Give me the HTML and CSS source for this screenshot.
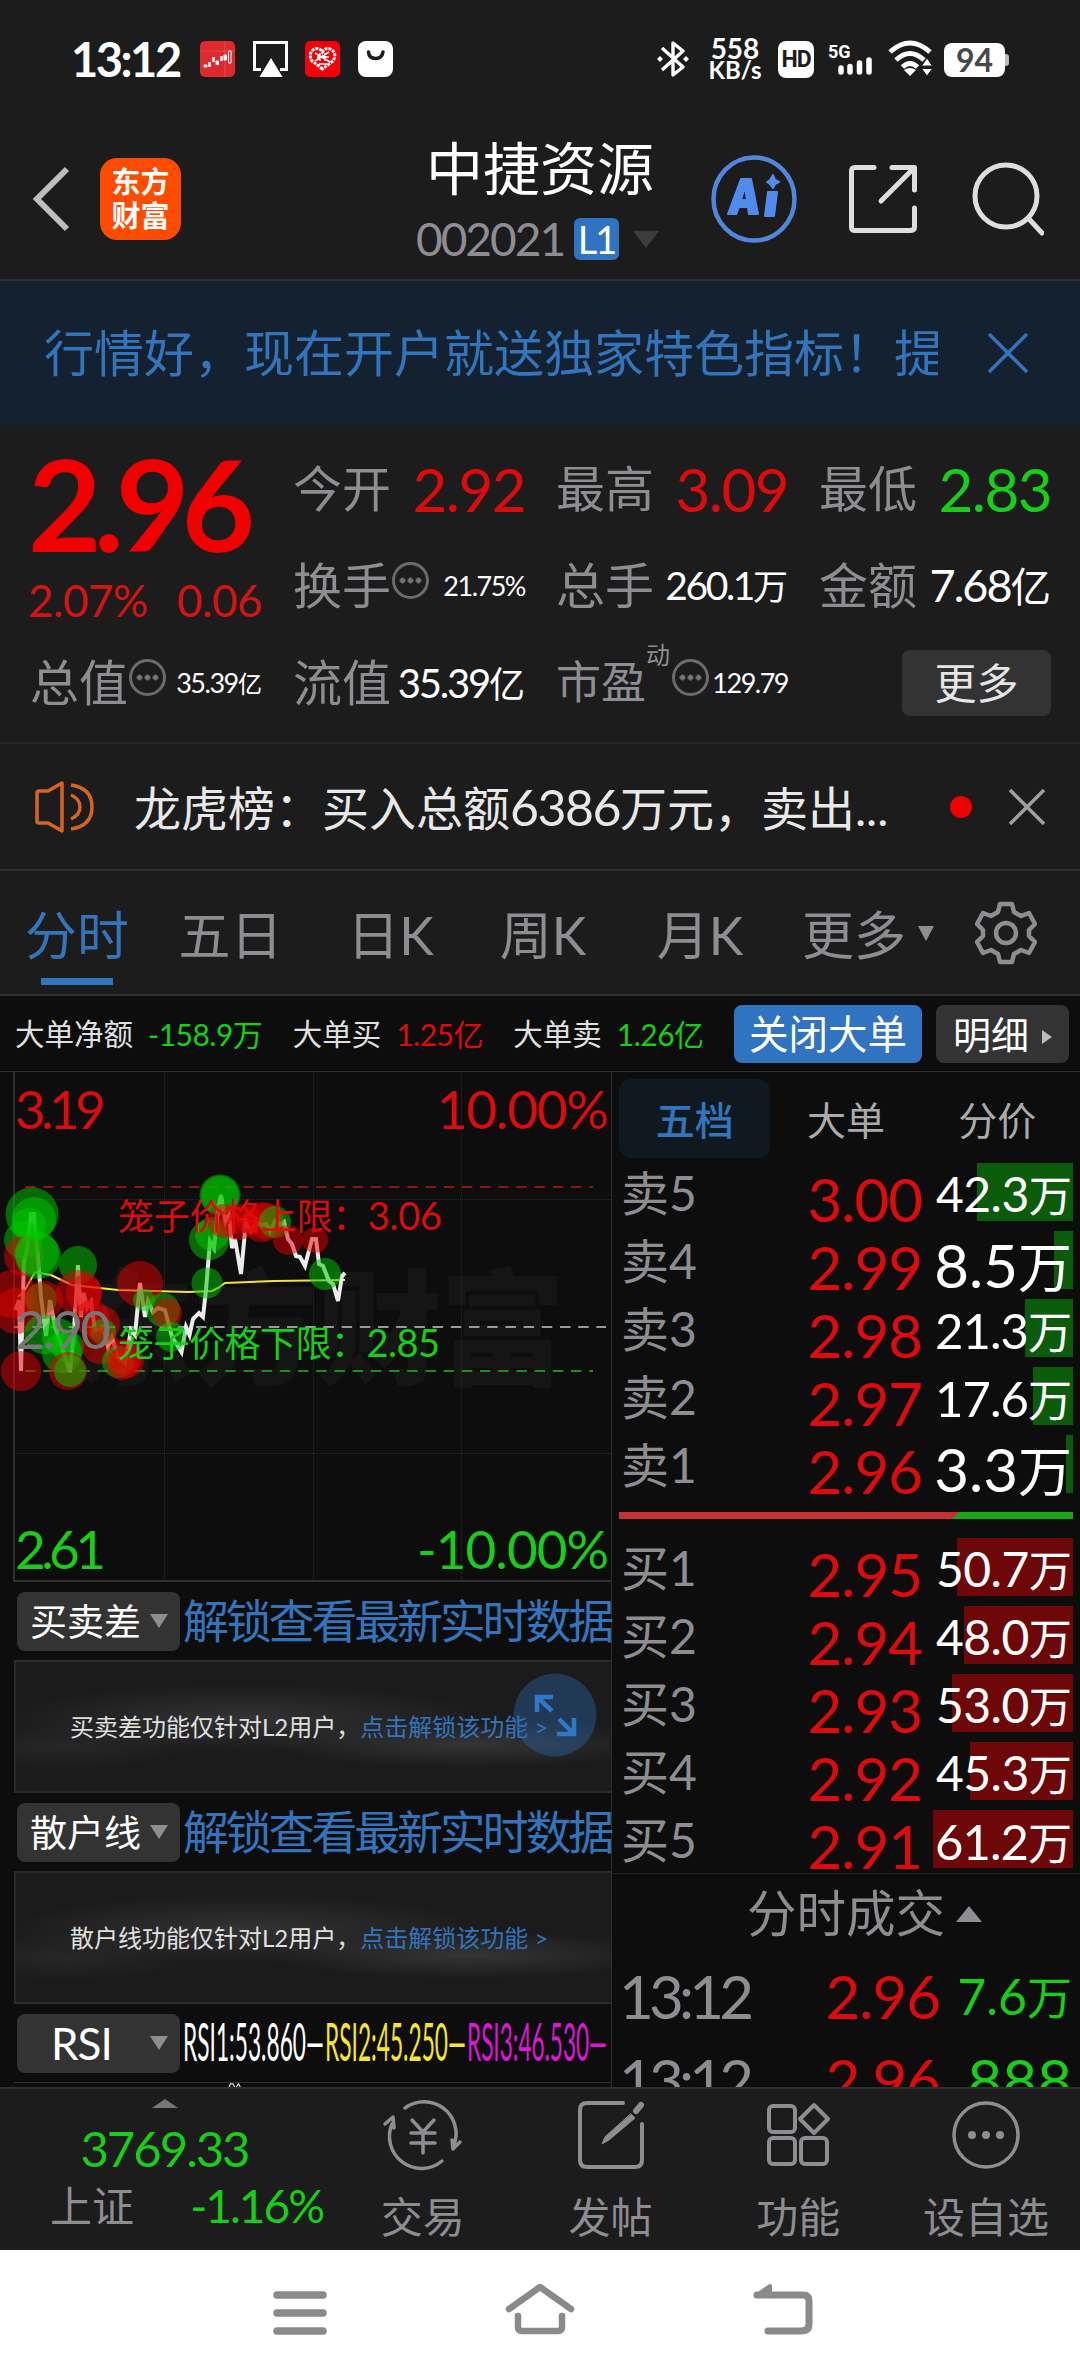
FILE: index.html
```html
<!DOCTYPE html>
<html lang="zh-CN">
<head>
    <meta charset="UTF-8">
    <meta name="viewport" content="width=device-width, initial-scale=1.0">
    <title>中捷资源 002021</title>
    <link rel="stylesheet" href="styles.css">
</head>
<body>
    <div class="status">
        <span class="clock">13:12</span>
        <svg class="st-ico" viewBox="0 0 35 36">
            <rect width="35" height="36" rx="5" fill="#dd2a2e"/>
            <path d="M0 10H35M25 0V36" stroke="#e8484a" stroke-width="1"/>
            <g fill="#fff" stroke="#fff" stroke-width="1">
                <path d="M4 24h3v2H4zM16 20h2.500v3.500H16zM24 14h2.500v5H24z"/>
                <path d="M9.500 21v5M13.500 16v5M21.500 15v5" stroke-width="2.500"/>
                <path d="M28.500 10h2.500v12h-2.500z" fill="none"/>
            </g>
        </svg>
        <svg class="st-ico" viewBox="0 0 35 36">
            <path d="M8 28.500H1.500V1.500H33.500V28.500H27" fill="none" stroke="#fff" stroke-width="3"/>
            <path d="M18 17L29.500 36H6.500Z" fill="#fff"/>
        </svg>
        <svg class="st-ico" viewBox="0 0 35 36">
            <rect width="35" height="36" rx="5" fill="#f4000b"/>
            <path d="M17.500 28L7 20Q3 13 8 9Q14 5 17.500 11Q21 5 27 9Q32 13 28 20Z" fill="none" stroke="#fff" stroke-width="3" stroke-dasharray="3 1"/>
            <path d="M10 12l15 9M10 20l14-9M15 12v8M20 12v8M12 16h12M14 23h8" stroke="#fff" stroke-width="1.600"/>
        </svg>
        <svg class="st-ico" viewBox="0 0 35 36">
            <rect width="35" height="36" rx="8" fill="#fff"/>
            <path d="M10.500 11Q11 17.500 17.500 17.500T25 11" fill="none" stroke="#1c1c1c" stroke-width="3.500" stroke-linecap="round"/>
        </svg>
        <div class="st-right">
            <svg width="33" height="36" viewBox="0 0 33 36">
                <path d="M5 7L26 26L16 34V2L26 10L5 29" fill="none" stroke="#fff" stroke-width="3.400" stroke-linejoin="round"/>
                <path d="M3 15l3 3-3 3-3-3zM29 15l3 3-3 3-3-3z" fill="#fff"/>
            </svg>
            <div class="speed"><span>558</span><span>KB/s</span></div>
            <span class="hd">HD</span>
            <svg class="signal" width="46" height="36" viewBox="0 0 46 36">
                <text x="0" y="17" class="g5">5G</text>
                <path d="M13 27v4M22 25.500v5.500M31.500 22v9M41 19v12" stroke="#fff" stroke-width="5.500" stroke-linecap="round"/>
            </svg>
            <svg class="wifi" width="46" height="38" viewBox="0 0 46 38">
                <path d="M2 12Q22-6 42 12M8 20Q22 7 36 20M14.500 27Q22 20 29.500 27" fill="none" stroke="#fff" stroke-width="5"/>
                <path d="M22 36L16 30Q22 26 28 30Z" fill="#fff"/>
                <path d="M39 18L44.500 26H33.500ZM39 36L44.500 28.500H33.500Z" fill="#fff" stroke="#1c1c1c" stroke-width="1"/>
            </svg>
            <span class="battery">94</span>
        </div>
    </div>

    <div class="header">
        <svg class="back" width="40" height="68" viewBox="0 0 40 68">
            <path d="M35 4L5 34L35 64" fill="none" stroke="#bdbdbd" stroke-width="6"/>
        </svg>
        <div class="logo"><span>东方</span><span>财富</span></div>
        <div class="title">
            <h1>中捷资源</h1>
            <div class="code">002021<span class="l1">L1</span><i class="tri-down"></i></div>
        </div>
        <svg class="h-ico" width="86" height="88" viewBox="0 0 86 88">
            <ellipse cx="43" cy="44" rx="40.500" ry="41.500" fill="none" stroke="#5186df" stroke-width="4.500"/>
            <g fill="#4f8cee" stroke="#4f8cee" stroke-width="2" stroke-linejoin="round">
                <path fill-rule="evenodd" d="M30 24H40L47 59H38L37 52H28L25 59H17ZM34 32L30 45H36Z"/>
                <path d="M57 37H66L63 61H54Z"/>
                <path d="M62 20L64 25L68 27L64 29L62 33L59 29L56 27L59 25Z"/>
            </g>
        </svg>
        <svg class="h-ico share" width="72" height="72" viewBox="0 0 72 72" fill="none" stroke="#dedede" stroke-width="5" stroke-linecap="round" stroke-linejoin="round">
            <path d="M27 4.500H8Q4.500 4.500 4.500 8V64Q4.500 67.500 8 67.500H63Q67.500 67.500 67.500 64V45"/>
            <path d="M45 4.500H67.500V27M67 5L34 38"/>
        </svg>
        <svg class="h-ico search" width="72" height="76" viewBox="0 0 72 76" fill="none" stroke="#dedede" stroke-width="5" stroke-linecap="round">
            <circle cx="34" cy="35" r="31"/>
            <path d="M57 58L70 72"/>
        </svg>
    </div>

    <div class="banner">
        <p>行情好，现在开户就送独家特色指标！提</p>
        <svg width="42" height="42" viewBox="0 0 42 42"><path d="M2 2L40 40M40 2L2 40" stroke="#3375bd" stroke-width="3.500"/></svg>
    </div>

    <div class="quote">
        <div class="price">
            <b>2.96</b>
            <div class="change"><span>2.07%</span><span>0.06</span></div>
        </div>
        <div class="cell"><label>今开</label><em class="v60 up">2.92</em></div>
        <div class="cell"><label>最高</label><em class="v60 up">3.09</em></div>
        <div class="cell"><label>最低</label><em class="v60 down">2.83</em></div>
        <div class="cell"><label>换手</label><i class="dots"></i><em class="v27">21.75%</em></div>
        <div class="cell"><label>总手</label><em class="v40">260.1<u>万</u></em></div>
        <div class="cell"><label>金额</label><em class="v44">7.68<u>亿</u></em></div>
        <div class="cell"><label>总值</label><i class="dots"></i><em class="v27">35.39<u>亿</u></em></div>
        <div class="cell"><label>流值</label><em class="v38">35.39<u>亿</u></em></div>
        <div class="cell"><label class="pe">市盈<sup>动</sup></label><i class="dots"></i><em class="v27">129.79</em></div>
        <div class="cell"><button class="more">更多</button></div>
    </div>

    <div class="news">
        <svg width="62" height="52" viewBox="0 0 62 52" fill="none" stroke="#d8641e" stroke-width="3.500" stroke-linejoin="round">
            <path d="M3 12Q3 10 5 10H14L28 2V50L14 42H5Q3 42 3 40Z"/>
            <path d="M37 14Q46 18 46 26T37 38M37 4Q58 7 58 26T37 48"/>
        </svg>
        <p>龙虎榜：买入总额<span>6386</span>万元，卖出...</p>
        <i class="dot"></i>
        <svg width="36" height="36" viewBox="0 0 36 36"><path d="M1 1L35 35M35 1L1 35" stroke="#a0a0a0" stroke-width="3.500"/></svg>
    </div>

    <div class="tabs">
        <span class="active">分时</span>
        <span>五日</span>
        <span>日K</span>
        <span>周K</span>
        <span>月K</span>
        <span>更多<i></i></span>
        <svg width="62" height="64" viewBox="0 0 62 64" fill="none" stroke="#8e8d92" stroke-width="4.500" stroke-linejoin="round">
            <path d="M25 3H37L39 11L46 15L54 12L60 23L54 29V35L60 41L54 52L46 49L39 53L37 61H25L23 53L16 49L8 52L2 41L8 35V29L2 23L8 12L16 15L23 11Z"/>
            <circle cx="31" cy="32" r="10"/>
        </svg>
    </div>

    <div class="strip">
        <span>大单净额</span><em class="down">-158.9万</em>
        <span>大单买</span><em class="up">1.25亿</em>
        <span>大单卖</span><em class="down">1.26亿</em>
        <button class="close-big">关闭大单</button>
        <button class="detail">明细<i></i></button>
    </div>

    <div class="main">
        <div class="left">
            <svg class="chart" width="612" height="510" viewBox="0 0 612 510">
                <text class="wm" x="70" y="303" textLength="495">东方财富</text>
                <g stroke="#2a2a2a" stroke-width="1" stroke-dasharray="1 1">
                    <path d="M164.500 0V509M313.500 0V509M461.500 0V509M14 127.500H612M14 381.500H612"/>
                </g>
                <path d="M14 0V509H612" fill="none" stroke="#303030" stroke-width="2"/>
                <g fill="none" stroke-width="1.800" stroke-dasharray="10.500 7.700">
                    <path d="M25 115H593" stroke="#8d1512"/>
                    <path d="M14 255H606" stroke="#9a999c"/>
                    <path d="M25 299H593" stroke="#1b8f1b"/>
                </g>
                <path d="M18 225L25 218L35 200L51 203L72 213L118 218L188 220L212 219L218 216L225 211L274 209L345 208" fill="none" stroke="#f3e24a" stroke-width="2"/>
                <path d="M15.700 238L19 228L21 299L23 221L24 190L27 177L31 142H34L35 162L38 184L41 225L46 264L50 228L55 255L63 279L70 300L74 258L78 193L81 245L83.500 221L87 236L91 230L95 258L103 255L108 275L112 265L118 286L125 291L131 258L135 263L140 211L145 245L148 229L153 240L158 236L165 238L172 265L181.500 280L186 255L189.500 263L193 247L199 241L203 245L206 218L210 169L214 176L218 137L221 123L225.500 150L229 143L232 176L235 167L241 202L246 149L251 159L256 151L261 153L266 152L270 159L275 149L280 153L284 150L288 167L292 172L296 184L300 185L305 194L312 167H316L319 192L323 194L329 209L333 212L338 229L342 204L345 201" fill="none" stroke="#ececec" stroke-width="4"/>
                <g id="bubbles"></g>
                <text class="up s53" x="15" y="56.500" textLength="91">3.19</text>
                <text class="up s53" x="437" y="56.500" textLength="172">10.00%</text>
                <text class="down s53" x="15" y="497" textLength="91">2.61</text>
                <text class="down s53" x="417" y="497" textLength="192">-10.00%</text>
                <text class="base s53" x="15" y="277" textLength="96">2.90</text>
                <text class="up s36" x="118" y="157.500" textLength="324">笼子价格上限：<tspan class="s38">3.06</tspan></text>
                <text class="down s36" x="118" y="284.500" textLength="322">笼子价格下限：<tspan class="s38">2.85</tspan></text>
            </svg>

            <div class="bar"><button>买卖差<i></i></button><p>解锁查看最新实时数据</p></div>
            <div class="lock">
                <span>买卖差功能仅针对L2用户，</span><a>点击解锁该功能 &gt;</a>
                <svg class="expand" width="84" height="84" viewBox="0 0 84 84">
                    <circle cx="42" cy="42" r="41.500" fill="#2c6cb5" fill-opacity=".38"/>
                    <path d="M24 39V24H40M24 24L39 38M61 45V61H44M61 61L46 46" fill="none" stroke="#3079c8" stroke-width="4.500"/>
                </svg>
            </div>
            <div class="bar"><button>散户线<i></i></button><p>解锁查看最新实时数据</p></div>
            <div class="lock">
                <span>散户线功能仅针对L2用户，</span><a>点击解锁该功能 &gt;</a>
            </div>
            <div class="bar">
                <button class="rsi">RSI<i></i></button>
                <svg width="428" height="70" viewBox="0 0 428 70" class="rsi-vals">
                    <text x="0" y="53" fill="#fff" textLength="141" lengthAdjust="spacingAndGlyphs">RSI1:53.860—</text>
                    <text x="142" y="53" fill="#f5e62a" textLength="141" lengthAdjust="spacingAndGlyphs">RSI2:45.250—</text>
                    <text x="284" y="53" fill="#dc19d2" textLength="140" lengthAdjust="spacingAndGlyphs">RSI3:46.530—</text>
                </svg>
            </div>
            <svg class="next" width="598" height="5" viewBox="0 0 598 5"><path d="M194 5L196 1L199 1L201 5M203 5L206 1L208 5" fill="none" stroke="#ddd" stroke-width="1.500"/></svg>
        </div>

        <div class="right">
            <div class="book-tabs"><span class="active">五档</span><span>大单</span><span>分价</span></div>
            <div class="book sell">
                <div class="row"><span>卖5</span><em>3.00</em><b class="f46" style="--w:96px">42.3<u>万</u></b></div>
                <div class="row"><span>卖4</span><em>2.99</em><b class="f60" style="--w:19px">8.5<u>万</u></b></div>
                <div class="row"><span>卖3</span><em>2.98</em><b class="f48" style="--w:48px">21.3<u>万</u></b></div>
                <div class="row"><span>卖2</span><em>2.97</em><b class="f48" style="--w:40px">17.6<u>万</u></b></div>
                <div class="row"><span>卖1</span><em>2.96</em><b class="f60" style="--w:7px">3.3<u>万</u></b></div>
            </div>
            <div class="ratio"></div>
            <div class="book buy">
                <div class="row"><span>买1</span><em>2.95</em><b class="f46" style="--w:116px">50.7<u>万</u></b></div>
                <div class="row"><span>买2</span><em>2.94</em><b class="f46" style="--w:109px">48.0<u>万</u></b></div>
                <div class="row"><span>买3</span><em>2.93</em><b class="f46" style="--w:121px">53.0<u>万</u></b></div>
                <div class="row"><span>买4</span><em>2.92</em><b class="f46" style="--w:103px">45.3<u>万</u></b></div>
                <div class="row"><span>买5</span><em>2.91</em><b class="f48" style="--w:140px">61.2<u>万</u></b></div>
            </div>
            <div class="deal-head">分时成交<i></i></div>
            <div class="deal"><span>13:12</span><em>2.96</em><b class="f50">7.6<u>万</u></b></div>
            <div class="deal"><span>13:12</span><em>2.96</em><b class="f60">888</b></div>
        </div>
    </div>

    <div class="toolbar">
        <div class="index">
            <i></i>
            <b>3769.33</b>
            <div><span>上证</span><em>-1.16%</em></div>
        </div>
        <div class="tool">
            <svg width="80" height="72" viewBox="0 0 80 72" fill="none" stroke="#8e8d92" stroke-width="3.500" stroke-linecap="round" stroke-linejoin="round">
                <path d="M22 9A32 32 0 0 1 71 46M69 41L70 50L77 43"/>
                <path d="M59 62A32 32 0 0 1 9 25M2 25L10 18L11 29"/>
                <path d="M29 21L40 33L51 21M28 34H52M28 44H52M40 33V54"/>
            </svg>
            <span>交易</span>
        </div>
        <div class="tool">
            <svg width="72" height="72" viewBox="0 0 72 72" fill="none" stroke="#8e8d92" stroke-width="4" stroke-linecap="round">
                <path d="M48 4H12Q5 4 5 11V61Q5 68 12 68H60Q67 68 67 61V25"/>
                <path d="M66 6L61 12" stroke-width="6"/>
                <path d="M56 15L60 19L34 41L27 45L30 38Z" fill="#8e8d92" stroke-width="1"/>
            </svg>
            <span>发帖</span>
        </div>
        <div class="tool">
            <svg width="72" height="72" viewBox="0 0 72 72" fill="none" stroke="#8e8d92" stroke-width="4">
                <rect x="7" y="7" width="26" height="26" rx="4"/>
                <rect x="7" y="39" width="26" height="26" rx="4"/>
                <rect x="39" y="39" width="26" height="26" rx="4"/>
                <path d="M52 6L66 20L52 34L38 20Z" stroke-linejoin="round"/>
            </svg>
            <span>功能</span>
        </div>
        <div class="tool">
            <svg width="72" height="72" viewBox="0 0 72 72">
                <circle cx="36" cy="36" r="32" fill="none" stroke="#8e8d92" stroke-width="3.500"/>
                <g fill="#8e8d92"><circle cx="22" cy="36" r="4"/><circle cx="36" cy="36" r="4"/><circle cx="50" cy="36" r="4"/></g>
            </svg>
            <span>设自选</span>
        </div>
    </div>

    <div class="sysnav">
        <svg width="54" height="54" viewBox="0 0 54 54"><path d="M4 13H50M4 31H50M4 49H50" stroke="#8a8a8a" stroke-width="7.500" stroke-linecap="round"/></svg>
        <svg width="70" height="54" viewBox="0 0 70 54" fill="none" stroke="#8a8a8a" stroke-width="6.500" stroke-linecap="round" stroke-linejoin="round"><path d="M4 27L35 5L66 27M13 34V45Q13 49 17 49H53Q57 49 57 45V34"/></svg>
        <svg width="60" height="54" viewBox="0 0 60 54" fill="none" stroke="#8a8a8a" stroke-width="7" stroke-linecap="round" stroke-linejoin="round"><path d="M4 13H50Q56 13 56 19V42Q56 49 48 49H15"/><path d="M4 13L17 4V13Z" fill="#8a8a8a" stroke-width="4"/></svg>
    </div>

    <script>
        // big order bubbles: x, y, radius, side
        const bubbles = [
            [32, 142, 26.5, 's'], [34, 147, 22, 's'], [29, 153, 17, 's'], [23, 168, 19, 's'], [24, 184, 20, 'b'],
            [38, 184, 23, 's'], [37, 181, 22, 's'], [12, 222, 24, 'b'], [16, 239, 23, 'b'], [21, 299, 20, 'b'],
            [41, 227, 16, 's'], [44, 228, 19, 'b'], [78, 193, 19, 's'], [79, 221, 23, 'b'], [84, 221, 18, 'b'],
            [44, 262, 20, 's'], [60, 265, 18, 's'], [62, 281, 20, 's'], [68, 275, 16, 's'], [68, 299, 19, 'b'],
            [70, 299, 16, 's'], [92, 246, 18, 'b'], [102, 252, 18, 'b'], [103, 260, 13, 's'], [100, 273, 19, 'b'],
            [124, 285, 18, 'b'], [118, 290, 16, 's'], [122, 292, 16, 'b'], [127, 289, 17, 'b'], [140, 212, 23, 'b'],
            [144, 228, 11, 's'], [163, 238, 17, 's'], [167, 241, 15, 'b'], [171, 265, 15, 's'], [207, 211, 15.5, 's'],
            [209, 168, 20, 's'], [212, 162, 17, 's'], [220, 123, 20.5, 's'], [220, 123, 19, 's'], [224, 149, 17, 'b'],
            [238, 150, 18, 'b'], [250, 148, 14, 'b'], [262, 150, 20, 'b'], [266, 149, 18, 'b'], [275, 150, 16, 's'],
            [288, 168, 15, 'b'], [315, 168, 13, 'b'], [325, 202, 16, 's']
        ];
        const layer = document.getElementById('bubbles');
        bubbles.forEach(([x, y, r, side]) => {
            const c = document.createElementNS('http://www.w3.org/2000/svg', 'circle');
            c.setAttribute('cx', x);
            c.setAttribute('cy', y);
            c.setAttribute('r', r);
            c.setAttribute('class', side === 's' ? 'bub-s' : 'bub-b');
            layer.appendChild(c);
        });
    </script>
</body>
</html>
```
FILE: styles.css
```css
* {
    box-sizing: border-box;
}
body {
    margin: 0;
    width: 1080px;
    height: 2376px;
    overflow: hidden;
    background: #1c1c1c;
    color: #fff;
    font-family: Lato, "Noto Sans CJK SC", sans-serif;
    line-height: 1;
    display: flex;
    flex-direction: column;
}
body > div {
    flex: none;
}
h1, p {
    margin: 0;
    font-weight: 400;
    white-space: nowrap;
}
em, i, u {
    font-style: normal;
    text-decoration: none;
}
span, em, label {
    white-space: nowrap;
}
button {
    border: none;
    padding: 0;
    color: #fff;
    background: #333;
    font-family: inherit;
    line-height: 1;
    border-radius: 8px;
    white-space: nowrap;
}
/* digits run a bit larger than the unit behind them */
u {
    font-size: .9em;
    letter-spacing: 0;
}
.up {
    color: #dd0b0b;
    fill: #dd0b0b;
}
.down {
    color: #17cf17;
    fill: #17cf17;
}

/* status bar */
.status {
    height: 118px;
    padding: 0 72px 0 71px;
    display: flex;
    align-items: center;
}
.clock {
    width: 129px;
    font-size: 47px;
    font-weight: 700;
    letter-spacing: -2.500px;
}
.st-ico {
    width: 35px;
    height: 36px;
    margin-right: 17.500px;
}
.st-right {
    margin-left: auto;
    display: flex;
    align-items: center;
}
.speed {
    width: 50px;
    margin: 0 18px 0 20px;
    display: flex;
    flex-direction: column;
    align-items: center;
    font-size: 28px;
    font-weight: 700;
    line-height: 21px;
}
.speed span:last-child {
    font-size: 24px;
}
.hd {
    width: 36px;
    height: 37px;
    border-radius: 8px;
    background: #fff;
    color: #1c1c1c;
    font: 700 23px/37px Roboto, sans-serif;
    letter-spacing: -1px;
    text-align: center;
}
.signal {
    margin: 0 14px;
}
.g5 {
    font: 700 18px Roboto, sans-serif;
    fill: #fff;
}
.battery {
    position: relative;
    width: 61px;
    height: 34px;
    margin: 2px 3px 0 10px;
    border-radius: 8px;
    background: #fff;
    color: #484848;
    font-size: 32px;
    font-weight: 700;
    line-height: 34px;
    text-align: center;
}
.battery::after {
    content: "";
    position: absolute;
    right: -4px;
    top: 11px;
    width: 4px;
    height: 12px;
    border-radius: 0 3px 3px 0;
    background: #bbb;
}

/* title */
.header {
    height: 163px;
    padding: 0 35px 0 32px;
    border-bottom: 2px solid #303030;
    display: flex;
    align-items: center;
}
.logo {
    width: 81px;
    height: 82px;
    margin-left: 28px;
    border-radius: 17px;
    background: #ff4b00;
    display: flex;
    flex-direction: column;
    align-items: center;
    justify-content: center;
    font-size: 29px;
    font-weight: 700;
    line-height: 34px;
}
.title {
    width: 260px;
    margin: 5px 0 0 229px;
    text-align: center;
}
.title h1 {
    font-size: 57px;
    line-height: 76px;
}
.code {
    height: 66px;
    margin-left: 6px;
    display: flex;
    align-items: center;
    color: #8e8d92;
    font-size: 46px;
    letter-spacing: -2px;
}
.l1 {
    width: 45px;
    height: 42px;
    margin-left: 10px;
    border-radius: 6px;
    background: #3074c1;
    color: #fff;
    font-size: 38px;
    line-height: 42px;
    text-align: center;
}
.tri-down {
    margin-left: 14px;
    border: 13px solid transparent;
    border-top: 17px solid #3c3c3c;
    border-bottom: 0;
}
.h-ico {
    flex: none;
    margin-left: 41px;
}
.h-ico.share {
    margin-left: 50px;
}
.h-ico.search {
    margin-left: 53px;
}

.banner {
    height: 144px;
    padding: 0 51px 0 44px;
    background: #142130;
    color: #3375bd;
    font-size: 50px;
    display: flex;
    align-items: center;
    justify-content: space-between;
}
.banner p {
    width: 894px;
    overflow: hidden;
    line-height: 70px;
}

/* quote summary */
.quote {
    height: 319px;
    padding: 15px 29px 0 30px;
    border-bottom: 2px solid #282828;
    display: grid;
    grid-template-columns: repeat(4, 232px);
    grid-template-rows: repeat(3, 97px);
    column-gap: 31px;
}
.price {
    grid-row: span 2;
    margin-left: -2px;
    color: #f00000;
}
.price b {
    display: block;
    height: 130px;
    line-height: 127px;
    font-size: 127px;
    letter-spacing: -8px;
}
.change {
    height: 60px;
    display: flex;
    align-items: center;
    justify-content: space-between;
    color: #d41313;
    font-size: 44px;
    letter-spacing: -.500px;
}
.cell {
    display: flex;
    align-items: center;
    justify-content: space-between;
}
.cell label {
    color: #8e8d92;
    font-size: 49px;
}
.cell em {
    flex: 1;
    text-align: right;
}
.v60 {
    font-size: 60px;
    letter-spacing: -1.500px;
}
.v44 {
    font-size: 45px;
    letter-spacing: -2px;
}
.v40 {
    font-size: 39px;
    letter-spacing: -2.400px;
}
.v38 {
    font-size: 40px;
    letter-spacing: -2.200px;
}
.v27 {
    font-size: 27px;
    letter-spacing: -1.500px;
}
.dots {
    width: 37px;
    height: 37px;
    margin: -10px 0 0 1px;
    border: 3px solid #6b6b6e;
    border-radius: 50%;
    background: radial-gradient(circle, #77777a 2.500px, transparent 3px) center / 8px 8px;
    background-clip: content-box;
    padding: 11px 3px;
}
.cell .pe {
    position: relative;
    font-size: 45px;
    margin-right: 25px;
}
.pe sup {
    position: absolute;
    left: 90px;
    top: -17px;
    font-size: 24px;
    line-height: 1;
}
.more {
    width: 149px;
    height: 66px;
    margin-left: auto;
    font-size: 42px;
    color: #e6e6e6;
}

.news {
    height: 127px;
    padding: 0 35px 0 34px;
    border-bottom: 2px solid #303030;
    display: flex;
    align-items: center;
}
.news p {
    width: 816px;
    margin-left: 38px;
    font-size: 47px;
    color: #e8e8e8;
}
.news p span {
    font-size: 50px;
    letter-spacing: -1.500px;
}
.dot {
    width: 22px;
    height: 22px;
    margin-right: 37px;
    border-radius: 50%;
    background: #f00000;
}

.tabs {
    height: 125px;
    border-bottom: 2px solid #303030;
    display: grid;
    grid-template-columns: 154px 153px 167px 138px 176px 160px 116px;
    align-items: center;
    justify-items: center;
    color: #8e8d92;
    font-size: 52px;
}
.tabs span {
    height: 123px;
    line-height: 129px;
}
.tabs .active {
    color: #3375bd;
    background: linear-gradient(#3375bd, #3375bd) center 107px / 72px 7px no-repeat;
}
.tabs i {
    display: inline-block;
    margin: 0 0 14px 12px;
    border: 8px solid transparent;
    border-top: 15px solid #8e8d92;
    border-bottom: 0;
}

.strip {
    height: 76px;
    padding: 0 11px 0 15px;
    background: #0d0d0d;
    border-bottom: 1px solid #303030;
    display: flex;
    align-items: center;
    font-size: 29.500px;
    color: #e0e0e0;
}
.strip em {
    margin: 0 auto 0 15px;
    font-size: 30px;
    letter-spacing: -.500px;
}
.close-big {
    width: 188px;
    height: 58px;
    background: #3074c1;
    font-size: 39.500px;
}
.detail {
    width: 133px;
    height: 58px;
    margin-left: 14px;
    font-size: 38px;
}
.detail i {
    display: inline-block;
    margin: 0 0 5px 13px;
    border: 7px solid transparent;
    border-left: 10px solid #bbb;
    border-right: 0;
}

/* chart and order book */
.main {
    height: 1015px;
    background: #0d0d0d;
    overflow: hidden;
    display: flex;
}
.left {
    width: 612px;
    border-right: 1px solid #303030;
}
.chart {
    display: block;
}
.chart .s53 {
    font-size: 53px;
}
.chart .s36 {
    font-size: 36px;
}
.chart .s38 {
    font-size: 38px;
}
.chart .base {
    fill: #777;
}
.wm {
    font-size: 125px;
    font-weight: 900;
    fill: #151515;
}
.bub-s {
    fill: rgba(0, 200, 0, .5);
}
.bub-b {
    fill: rgba(230, 0, 0, .5);
}
.bar {
    height: 78px;
    padding-left: 17px;
    display: flex;
    align-items: center;
}
.bar button {
    flex: none;
    width: 163px;
    height: 59px;
    margin-right: 3px;
    font-size: 37px;
    display: flex;
    align-items: center;
    justify-content: space-between;
    padding: 0 12px 0 13px;
}
.bar button i {
    border: 9px solid transparent;
    border-top: 14px solid #8e8d92;
    border-bottom: 0;
}
.bar .rsi {
    padding-left: 34px;
    font-size: 44px;
    letter-spacing: -1px;
}
.bar p {
    font-size: 46px;
    letter-spacing: -3.200px;
    color: #3375bd;
}
.rsi-vals {
    flex: none;
    font-size: 52px;
}
.lock {
    position: relative;
    height: 133px;
    margin-left: 14px;
    padding-left: 54px;
    border: 2px solid #2a2a2a;
    border-right: 0;
    background:
        radial-gradient(ellipse 240px 34px at 230px 56px, #333, rgba(51, 51, 51, 0)),
        radial-gradient(ellipse 200px 24px at 450px 82px, #353535, rgba(53, 53, 53, 0)),
        radial-gradient(ellipse 130px 24px at 50px 84px, #272727, rgba(39, 39, 39, 0)),
        #1b1b1b;
    display: flex;
    align-items: center;
    font-size: 24px;
    color: #e0e0e0;
}
.lock a {
    color: #3375bd;
    white-space: nowrap;
}
.expand {
    position: absolute;
    left: 497px;
    top: 11px;
}
.next {
    display: block;
    margin-left: 14px;
    border-top: 1px solid #303030;
}

.right {
    width: 468px;
    padding: 7px 7px 0;
}
.book-tabs {
    height: 79px;
    display: flex;
    margin-bottom: 5px;
    font-size: 39px;
    color: #aaa;
}
.book-tabs span {
    flex: 1;
    line-height: 82px;
    text-align: center;
    border-radius: 12px;
}
.book-tabs .active {
    background: #111920;
    color: #3375bd;
    font-weight: 500;
}
.row {
    height: 58px;
    margin-bottom: 10px;
    display: flex;
    align-items: center;
    color: #8e8d92;
}
.row span {
    width: 130px;
    padding: 2px 0 0 2px;
    font-size: 48px;
}
.row em {
    width: 173px;
    padding-top: 13px;
    text-align: right;
    font-size: 60px;
    letter-spacing: -1px;
    color: #dd0b0b;
}
.row b {
    width: 151px;
    height: 58px;
    padding-right: 1px;
    color: #fff;
    font-weight: 400;
    line-height: 62px;
    text-align: right;
    white-space: nowrap;
    background: linear-gradient(#0a5c0a, #0a5c0a) right / var(--w) 100% no-repeat;
}
.buy b {
    background-image: linear-gradient(#6e0808, #6e0808);
}
.f46 {
    font-size: 48px;
    letter-spacing: -.500px;
}
.f48 {
    font-size: 49px;
    letter-spacing: -1px;
}
.row .f60 {
    line-height: 68px;
}
.f60 {
    font-size: 60px;
}
.f50 {
    font-size: 50px;
}
.ratio {
    height: 7px;
    margin: 19px 0;
    background: linear-gradient(135deg, #c43232 240px, #1aa81a 241px);
}
.deal-head {
    height: 81px;
    margin: -5px -7px 0;
    padding-left: 135px;
    border-top: 1px solid #222;
    display: flex;
    align-items: center;
    color: #8e8d92;
    font-size: 49.500px;
}
.deal-head i {
    margin-left: 11px;
    border: 13px solid transparent;
    border-bottom: 16px solid #8e8d92;
    border-top: 0;
}
.deal {
    height: 84px;
    display: flex;
    align-items: center;
    color: #8e8d92;
    font-size: 60px;
}
.deal span {
    width: 150px;
    letter-spacing: -4.800px;
}
.deal em {
    width: 171px;
    text-align: right;
    color: #dd0b0b;
    letter-spacing: -1px;
}
.deal b {
    width: 132px;
    text-align: right;
    font-weight: 400;
    color: #17cf17;
}

/* bottom toolbar */
.toolbar {
    height: 163px;
    border-top: 2px solid #303030;
    display: flex;
}
.index {
    width: 329px;
    padding-top: 10px;
    color: #17cf17;
    display: flex;
    flex-direction: column;
    align-items: center;
}
.index i {
    border: 13px solid transparent;
    border-bottom: 9px solid #77767a;
    border-top: 0;
}
.index b {
    margin-top: 12px;
    font-size: 49px;
    font-weight: 400;
    letter-spacing: -2px;
    line-height: 56px;
}
.index div {
    width: 100%;
    padding: 3px 6px 0 50px;
    display: flex;
    align-items: center;
    justify-content: space-between;
    font-size: 46px;
    letter-spacing: -2px;
    line-height: 54px;
}
.index span {
    color: #8e8d92;
    font-size: 42px;
    letter-spacing: 0;
}
.tool {
    width: 187.750px;
    padding-top: 10px;
    color: #8e8d92;
    font-size: 42px;
    display: flex;
    flex-direction: column;
    align-items: center;
}
.tool svg {
    overflow: visible;
}
.tool span {
    margin-top: 25px;
}

.sysnav {
    height: 126px;
    padding-top: 32px;
    background: #fff;
    display: flex;
}
.sysnav svg {
    margin-left: 273px;
}
.sysnav svg + svg {
    margin-left: 178px;
}
```
